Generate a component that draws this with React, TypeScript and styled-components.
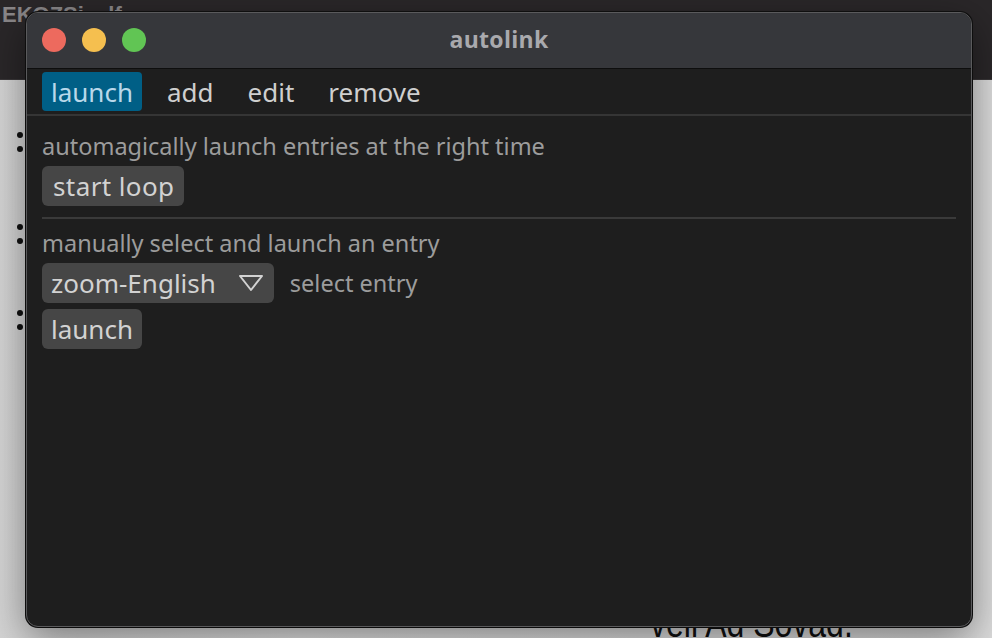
import React from 'react'
import styled, { createGlobalStyle } from 'styled-components'

const GlobalStyle = createGlobalStyle`
  html, body {
    margin: 0;
    padding: 0;
    width: 992px;
    height: 638px;
    overflow: hidden;
    font-family: 'Noto Sans', 'Open Sans', sans-serif;
  }
`

const Desktop = styled.div`
  position: relative;
  width: 992px;
  height: 638px;
  overflow: hidden;
  background: linear-gradient(90deg, #d4d4d4 0%, #e6e6e6 30%, #dcdcdc 100%);
  padding: 12px 0 0 26px;
  box-sizing: border-box;
`

// the app lying behind the window
const BackApp = styled.div`
  position: absolute;
  inset: 0;
  z-index: 0;
`

const BackBar = styled.div`
  height: 80px;
  background: #2a2729;
  color: #8a8789;
  font: 700 22px 'Liberation Sans', sans-serif;
  padding: 2px 0 0 2px;
  box-sizing: border-box;
  border-bottom: 1px solid #3a3739;
`

const Bullet = styled.div<{ $top: number }>`
  position: absolute;
  left: 17px;
  top: ${p => p.$top}px;
  width: 6px;
  height: 20px;
  display: flex;
  flex-direction: column;
  justify-content: space-between;
  &::before, &::after {
    content: '';
    width: 6px;
    height: 6px;
    border-radius: 50%;
    background: #111;
  }
`

const BackText = styled.div`
  position: absolute;
  left: 650px;
  top: 603px;
  font: 40px 'Liberation Sans', sans-serif;
  line-height: 40px;
  transform: scaleX(0.8);
  transform-origin: left top;
  color: #111;
`

const Window = styled.div`
  position: relative;
  z-index: 1;
  width: 946px;
  height: 615px;
  box-sizing: border-box;
  border: 1px solid #5a5a5c;
  border-radius: 12px;
  background: #1e1e1e;
  overflow: hidden;
  display: flex;
  flex-direction: column;
  box-shadow: 0 12px 40px rgba(0, 0, 0, 0.45), 0 0 0 1px #111;
`

const TitleBar = styled.div`
  position: relative;
  height: 55px;
  flex-shrink: 0;
  background: #36373b;
  border-bottom: 1px solid #0e0e0e;
  display: flex;
  align-items: center;
  justify-content: center;
`

const Lights = styled.div`
  position: absolute;
  left: 15px;
  top: 15px;
  display: flex;
  gap: 16px;
`

const Light = styled.span<{ $color: string }>`
  width: 24px;
  height: 24px;
  border-radius: 50%;
  background: ${p => p.$color};
`

const Title = styled.div`
  font: 700 23px 'Open Sans', 'Noto Sans', sans-serif;
  color: #a9a9ad;
  letter-spacing: 0.3px;
  margin: 0 0 3px 0;
`

const TabBar = styled.div`
  height: 45px;
  flex-shrink: 0;
  display: flex;
  align-items: center;
  gap: 16px;
  padding: 0 15px;
  border-bottom: 2px solid #353535;
`

const Tab = styled.div<{ $active?: boolean }>`
  height: 39px;
  display: flex;
  align-items: center;
  padding: 0 9px;
  border-radius: 4px;
  font-size: 26px;
  color: ${p => (p.$active ? '#b9d8ea' : '#cfcfcf')};
  background: ${p => (p.$active ? '#005f86' : 'transparent')};
`

const Content = styled.div`
  display: flex;
  flex-direction: column;
  padding: 16px 15px 0 15px;
`

const Section = styled.div`
  display: flex;
  flex-direction: column;
  align-items: flex-start;
  gap: 6px;
`

const Hint = styled.div`
  font-size: 23.5px;
  line-height: 28px;
  color: #9c9c9c;
`

const Button = styled.div`
  height: 40px;
  display: flex;
  align-items: center;
  padding: 0 9px;
  border-radius: 6px;
  background: #464646;
  color: #d2d2d2;
  font-size: 26px;
`

const LoopButton = styled(Button)`
  padding: 0 10px 0 11px;
  letter-spacing: 0.4px;
`

const Separator = styled.div`
  height: 2px;
  background: #3a3a3a;
  margin: 11px 0 10px 0;
`

const Row = styled.div`
  display: flex;
  align-items: center;
  gap: 16px;
`

const Combo = styled(Button)`
  gap: 22px;
  padding-right: 10px;
`

function App() {
  return (
    <>
      <GlobalStyle />
      <Desktop>
        <BackApp>
          <BackBar>EKOZSi&nbsp;&nbsp;&nbsp;&nbsp;lf</BackBar>
          <Bullet $top={132} />
          <Bullet $top={224} />
          <Bullet $top={310} />
          <BackText>veli Ad Sovad.</BackText>
        </BackApp>
        <Window>
          <TitleBar>
            <Lights>
              <Light $color="#ed6a5e" />
              <Light $color="#f5bf4f" />
              <Light $color="#61c554" />
            </Lights>
            <Title>autolink</Title>
          </TitleBar>
          <TabBar>
            <Tab $active>launch</Tab>
            <Tab>add</Tab>
            <Tab>edit</Tab>
            <Tab>remove</Tab>
          </TabBar>
          <Content>
            <Section>
              <Hint>automagically launch entries at the right time</Hint>
              <LoopButton>start loop</LoopButton>
            </Section>
            <Separator />
            <Section>
              <Hint>manually select and launch an entry</Hint>
              <Row>
                <Combo>
                  zoom-English
                  <svg width="26" height="20" viewBox="0 0 26 20">
                    <path d="M2 3 L24 3 L13 17 Z" fill="none" stroke="#d2d2d2" strokeWidth="2" strokeLinejoin="round" />
                  </svg>
                </Combo>
                <Hint>select entry</Hint>
              </Row>
              <Button>launch</Button>
            </Section>
          </Content>
        </Window>
      </Desktop>
    </>
  )
}

export default App
